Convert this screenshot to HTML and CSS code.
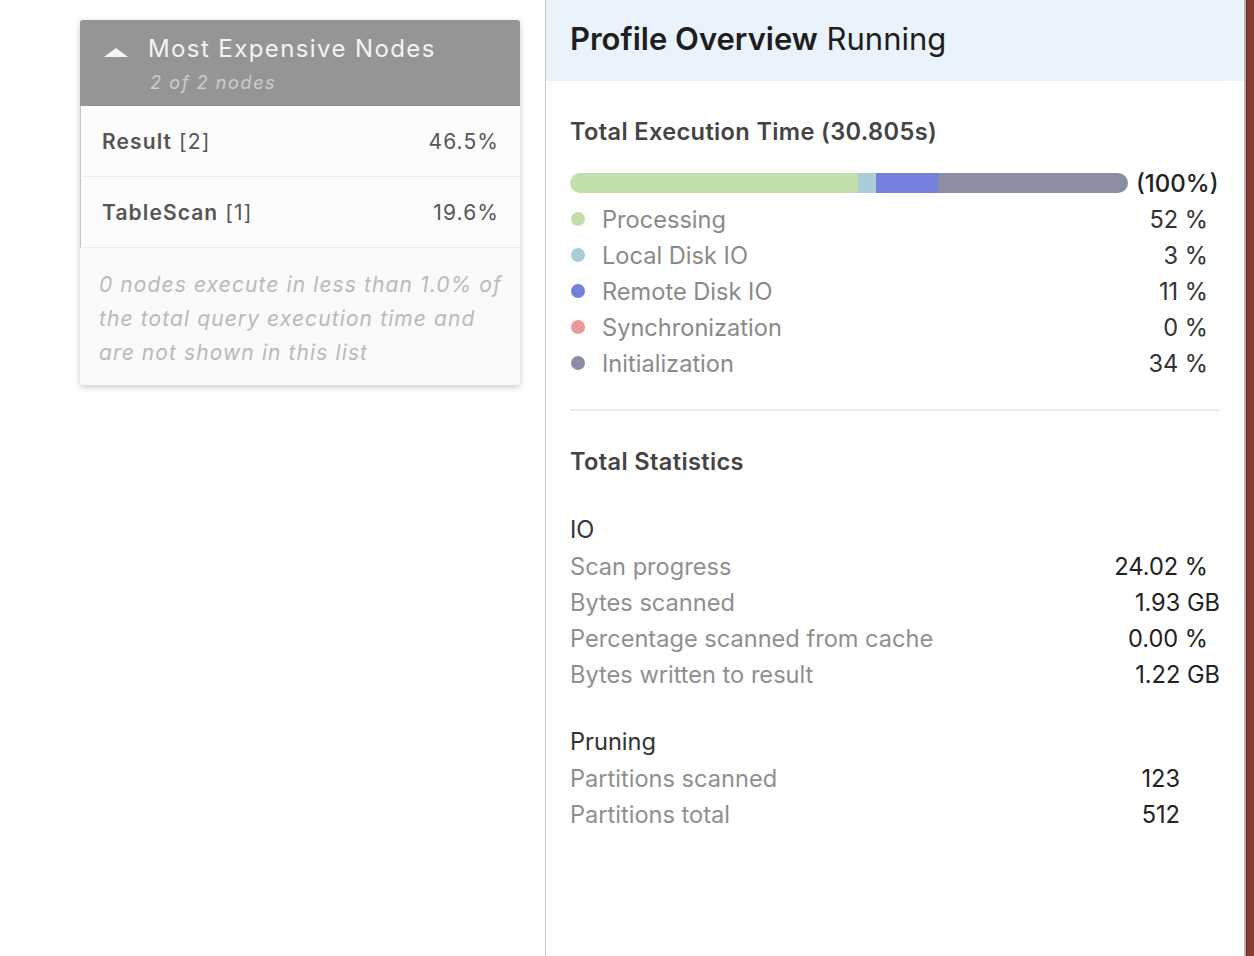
FILE: index.html
```html
<!DOCTYPE html>
<html>
<head>
<meta charset="utf-8">
<link rel="stylesheet" href="styles.css">
</head>
<body>
<div class="app">
  <div class="left">
    <div class="card">
      <div class="card-head">
        <svg class="caret" width="24" height="12" viewBox="0 0 24 12"><polygon points="0,11 12,2 24,11" fill="#f4f4f4"/></svg>
        <div class="head-text">
          <div class="card-title">Most Expensive Nodes</div>
          <div class="card-sub">2 of 2 nodes</div>
        </div>
      </div>
      <div class="node-row"><span><b>Result</b> [2]</span><span>46.5%</span></div>
      <div class="node-row"><span><b>TableScan</b> [1]</span><span>19.6%</span></div>
      <div class="card-note">0 nodes execute in less than 1.0% of the total query execution time and are not shown in this list</div>
    </div>
  </div>
  <div class="panel">
    <div class="panel-head"><b>Profile Overview</b> Running</div>
    <div class="panel-body">
      <div class="sec-title">Total Execution Time (30.805s)</div>
      <div class="bar-row">
        <div class="bar">
          <div class="seg s-proc" style="width:51.6%"></div>
          <div class="seg s-local" style="width:3.2%"></div>
          <div class="seg s-remote" style="width:11.1%"></div>
          <div class="seg s-init" style="width:34.1%"></div>
        </div>
        <span class="bar-total">(100%)</span>
      </div>
      <div class="legend">
        <div class="lrow"><span class="dot s-proc"></span><span class="lname">Processing</span><span class="lval">52 %</span></div>
        <div class="lrow"><span class="dot s-local"></span><span class="lname">Local Disk IO</span><span class="lval">3 %</span></div>
        <div class="lrow"><span class="dot s-remote"></span><span class="lname">Remote Disk IO</span><span class="lval">11 %</span></div>
        <div class="lrow"><span class="dot s-sync"></span><span class="lname">Synchronization</span><span class="lval">0 %</span></div>
        <div class="lrow"><span class="dot s-init"></span><span class="lname">Initialization</span><span class="lval">34 %</span></div>
      </div>
      <hr class="divider">
      <div class="sec-title stats-title">Total Statistics</div>
      <div class="group">
        <div class="gtitle">IO</div>
        <div class="srow"><span class="sname">Scan progress</span><span class="sval pct">24.02 %</span></div>
        <div class="srow"><span class="sname">Bytes scanned</span><span class="sval">1.93 GB</span></div>
        <div class="srow"><span class="sname">Percentage scanned from cache</span><span class="sval pct">0.00 %</span></div>
        <div class="srow"><span class="sname">Bytes written to result</span><span class="sval">1.22 GB</span></div>
      </div>
      <div class="group">
        <div class="gtitle">Pruning</div>
        <div class="srow"><span class="sname">Partitions scanned</span><span class="sval num">123</span></div>
        <div class="srow"><span class="sname">Partitions total</span><span class="sval num">512</span></div>
      </div>
    </div>
  </div>
  <div class="edge"></div>
</div>
</body>
</html>
```

FILE: styles.css
```css
* { box-sizing: border-box; }
html, body { margin: 0; padding: 0; background: #fff; }
body { font-family: Inter, "Noto Sans", sans-serif; }

.app { display: flex; height: 956px; overflow: hidden; }

.left { width: 545px; flex: none; padding: 20px 0 0 80px; }

.card {
  width: 440px;
  background: #fafafa;
  border-radius: 3px;
  box-shadow: 0 2px 6px rgba(0,0,0,0.22);
  overflow: hidden;
}
.card-head {
  background: #959595;
  height: 86px;
  display: flex;
  align-items: flex-start;
  padding: 14px 0 0 24px;
}
.caret { margin-top: 12px; margin-right: 20px; flex: none; }
.card-title { color: #f3f3f3; font-size: 24px; letter-spacing: 1.4px; line-height: 30px; }
.card-sub { color: #cdcdcd; font-size: 18px; font-style: italic; line-height: 34px; letter-spacing: 1.6px; padding: 2px 0 0 2px; }

.node-row {
  display: flex;
  justify-content: space-between;
  align-items: center;
  height: 71px;
  padding: 0 21px 0 21px;
  background: #fcfcfc;
  border-left: 1px solid #c4c4c4;
  border-bottom: 1px solid #ececec;
  font-size: 21px;
  letter-spacing: 1.1px;
  color: #555;
}
.node-row b { font-weight: 600; }

.card-note {
  padding: 20px 10px 15px 19px;
  font-size: 21px;
  line-height: 34px;
  font-style: italic;
  letter-spacing: 1.1px;
  color: #b9b9b9;
  background: #fafafa;
}

.panel {
  flex: 1;
  border-left: 1px solid #c9c9c9;
  display: flex;
  flex-direction: column;
}
.panel-head {
  background: #eaf3fc;
  height: 81px;
  padding: 19px 0 0 24px;
  font-size: 31px;
  line-height: 40px;
  color: #1e1e1e;
}
.panel-head b { font-weight: 600; }
.panel-body { padding: 34px 24px 0 24px; }

.sec-title { font-size: 23.6px; font-weight: 600; color: #444; line-height: 34px; letter-spacing: 0.35px; }

.bar-row { display: flex; align-items: center; margin-top: 22px; height: 24px; }
.bar { width: 558px; height: 20px; border-radius: 10px; overflow: hidden; display: flex; }
.seg { height: 100%; }
.s-proc { background: #c2dfab; }
.s-local { background: #a9ced7; }
.s-remote { background: #7580dc; }
.s-sync { background: #e99a98; }
.s-init { background: #8b8ea3; }
.bar-total { margin-left: 8px; font-size: 24px; font-weight: 500; color: #222; }

.legend { margin-top: 6px; }
.lrow { display: flex; align-items: center; height: 36px; font-size: 23.6px; }
.dot { width: 14px; height: 14px; border-radius: 50%; margin: 0 17px 0 1px; flex: none; }
.lname { color: #8a8a8a; flex: 1; }
.lval { color: #333; padding-right: 12px; }

.divider { border: 0; border-top: 2px solid #ebebeb; margin: 28px 0 0 0; }
.stats-title { margin-top: 34px; }

.group { margin-top: 33px; }
.group + .group { margin-top: 32px; }
.gtitle { font-size: 23.6px; color: #333; line-height: 36px; }
.srow { display: flex; justify-content: space-between; align-items: center; height: 36px; font-size: 23.6px; }
.sname { color: #8f8f8f; }
.sval { color: #222; }
.sval.pct { padding-right: 12px; }
.sval.num { padding-right: 40px; }

.edge {
  width: 10px;
  flex: none;
  border-left: 2px solid #b5b5b5;
  background: #8c3d31;
  box-shadow: inset 1px 0 0 #5a2a22;
}
```
